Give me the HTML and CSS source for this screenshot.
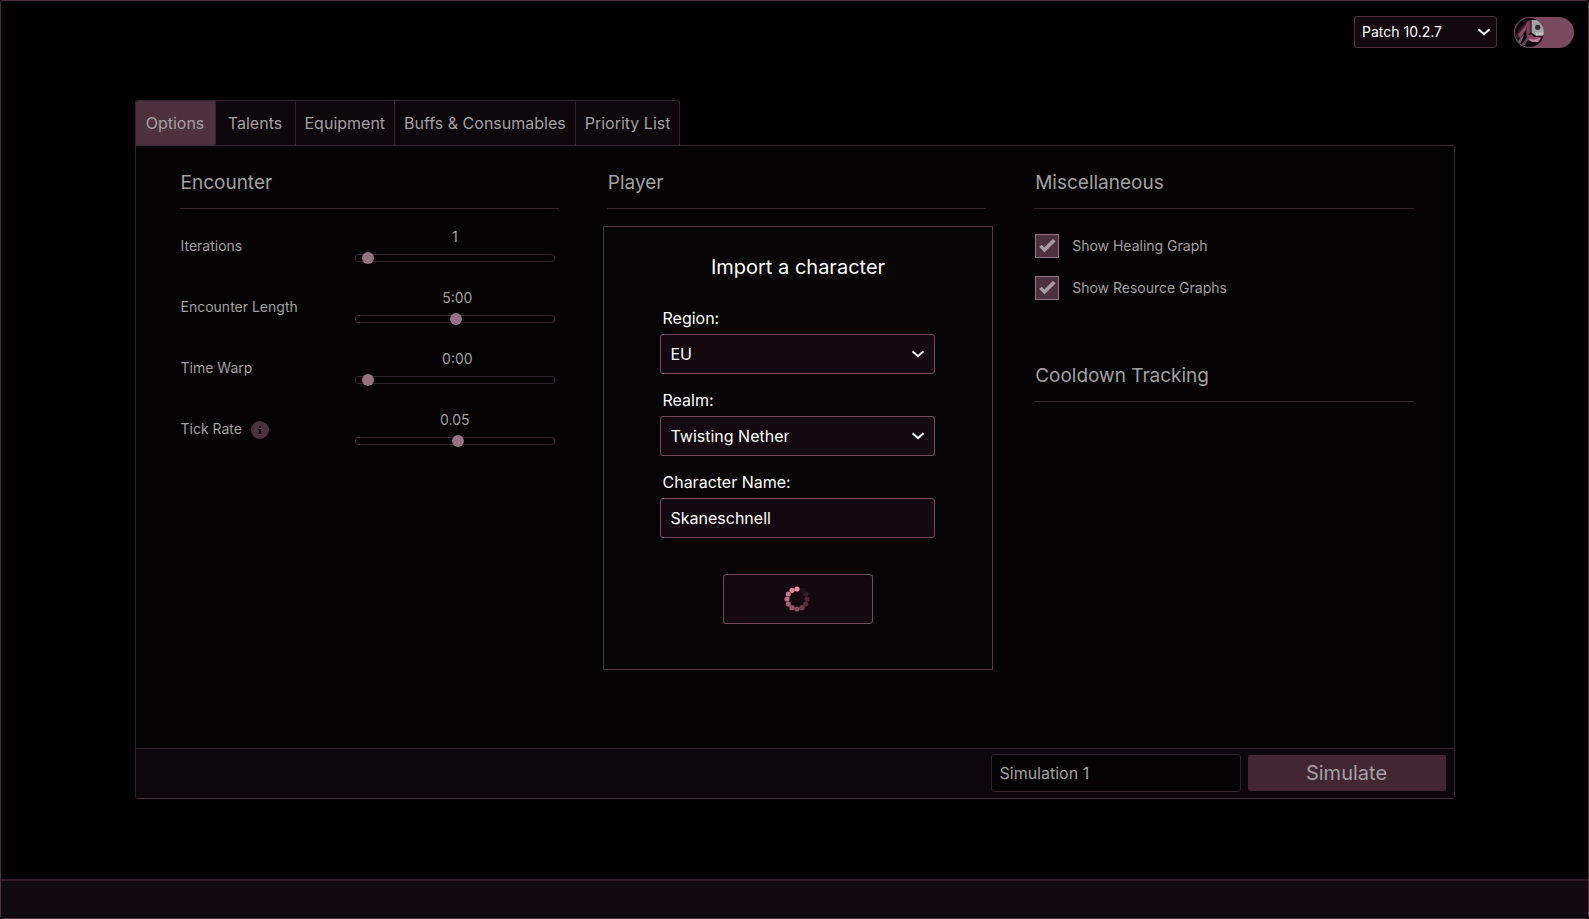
FILE: index.html
```html
<!DOCTYPE html>
<html lang="en">
<head>
<meta charset="utf-8">
<meta name="viewport" content="width=device-width, initial-scale=1">
<title>Simulation options</title>
<link rel="stylesheet" href="styles.css">
</head>
<body>
<div class="app">
  <header class="topbar">
    <div class="select-wrap">
      <select class="patch-select" aria-label="Game version">
        <option>Patch 10.2.7</option>
      </select>
      <svg class="chevron" viewBox="0 0 14 8" aria-hidden="true"><path d="M1.5 1.2 7 6.2 12.5 1.2"/></svg>
    </div>
    <button class="theme-toggle" type="button" aria-label="Switch theme">
      <svg class="theme-avatar" viewBox="0 0 30 30" aria-hidden="true">
        <defs><clipPath id="avatar-clip"><circle cx="15" cy="15" r="14"/></clipPath></defs>
        <g clip-path="url(#avatar-clip)">
          <rect width="30" height="30" fill="#0d080c"/>
          <path d="M1 19 5 12 13 4 16 3 12 12 7 19 2 24z" fill="#3a1e2c"/>
          <path d="M4 17 13 6 11 13 6 20z" fill="#8a4a68"/>
          <path d="M12 5 16 3 16 15 12 18z" fill="#7d3c5b"/>
          <path d="M4 23 10 16 8 22 5 27z" fill="#6e6168"/>
          <path d="M7 27 13 19 14 22 9 29z" fill="#5e4855"/>
          <path d="M12 17 17 17 19 19 27 19 24 24 14 23z" fill="#8e3f65"/>
          <path d="M14 21 19 22 26 20 23 24 17 24z" fill="#c48ba4"/>
          <path d="M17 3H30V18H21L17 15z" fill="#a3a3a3"/>
          <path d="M21 15H28V18H21z" fill="#c4c2c3"/>
          <circle cx="23" cy="10" r="2.6" fill="#2b2d2f"/>
        </g>
      </svg>
    </button>
  </header>

  <main class="workspace">
    <nav class="tabs" aria-label="Sections">
      <button class="tab tab-active" type="button">Options</button>
      <button class="tab" type="button">Talents</button>
      <button class="tab" type="button">Equipment</button>
      <button class="tab" type="button">Buffs &amp; Consumables</button>
      <button class="tab" type="button">Priority List</button>
    </nav>

    <div class="panel">
      <div class="columns">
        <section class="column">
          <h2 class="section-title">Encounter</h2>
          <div class="sliders">
            <div class="slider-row">
              <label class="slider-label" for="iterations">Iterations</label>
              <div class="slider-box">
                <output for="iterations">1</output>
                <input class="slider" id="iterations" type="range" min="1" max="100" value="1">
              </div>
            </div>
            <div class="slider-row">
              <label class="slider-label" for="length">Encounter Length</label>
              <div class="slider-box">
                <output class="time" for="length">5:00</output>
                <input class="slider" id="length" type="range" min="0" max="590" value="300">
              </div>
            </div>
            <div class="slider-row">
              <label class="slider-label" for="warp">Time Warp</label>
              <div class="slider-box">
                <output class="time" for="warp">0:00</output>
                <input class="slider" id="warp" type="range" min="0" max="600" value="0">
              </div>
            </div>
            <div class="slider-row">
              <div class="label-with-info">
                <label class="slider-label" for="tick">Tick Rate</label>
                <svg class="info" viewBox="0 0 18 18" aria-hidden="true">
                  <circle cx="9" cy="9" r="9" fill="#4f303d"/>
                  <path d="M8 5h2v2H8zM7 8h3v4h1v1H7v-1h1V9H7z" fill="#080406"/>
                </svg>
              </div>
              <div class="slider-box">
                <output for="tick">0.05</output>
                <input class="slider" id="tick" type="range" min="0.01" max="0.087" step="0.001" value="0.05">
              </div>
            </div>
          </div>
        </section>

        <section class="column">
          <h2 class="section-title">Player</h2>
          <form class="import">
            <h3 class="import-title">Import a character</h3>
            <div class="field">
              <label for="region">Region:</label>
              <div class="select-wrap">
                <select class="control" id="region"><option>EU</option></select>
                <svg class="chevron chevron-inset" viewBox="0 0 14 8" aria-hidden="true"><path d="M1.5 1.2 7 6.2 12.5 1.2"/></svg>
              </div>
            </div>
            <div class="field">
              <label for="realm">Realm:</label>
              <div class="select-wrap">
                <select class="control" id="realm"><option>Twisting Nether</option></select>
                <svg class="chevron chevron-inset" viewBox="0 0 14 8" aria-hidden="true"><path d="M1.5 1.2 7 6.2 12.5 1.2"/></svg>
              </div>
            </div>
            <div class="field">
              <label for="character">Character Name:</label>
              <input class="control" id="character" type="text" value="Skaneschnell">
            </div>
            <button class="import-button" type="button" aria-label="Importing">
              <svg class="spinner" viewBox="0 0 26 26" aria-hidden="true">
                <circle cx="13" cy="3" r="2.6"/>
                <circle cx="8" cy="4.3" r="2.6" opacity=".9"/>
                <circle cx="4.3" cy="8" r="2.6" opacity=".82"/>
                <circle cx="3" cy="13" r="2.6" opacity=".74"/>
                <circle cx="4.3" cy="18" r="2.6" opacity=".66"/>
                <circle cx="8" cy="21.7" r="2.6" opacity=".58"/>
                <circle cx="13" cy="23" r="2.6" opacity=".5"/>
                <circle cx="18" cy="21.7" r="2.6" opacity=".4"/>
                <circle cx="21.7" cy="18" r="2.6" opacity=".31"/>
                <circle cx="23" cy="13" r="2.6" opacity=".23"/>
                <circle cx="21.7" cy="8" r="2.6" opacity=".14"/>
                <circle cx="18" cy="4.3" r="2.6" opacity=".06"/>
              </svg>
            </button>
          </form>
        </section>

        <section class="column">
          <h2 class="section-title">Miscellaneous</h2>
          <div class="checks">
            <label class="check"><input type="checkbox" checked>Show Healing Graph</label>
            <label class="check"><input type="checkbox" checked>Show Resource Graphs</label>
          </div>
          <h2 class="section-title">Cooldown Tracking</h2>
        </section>
      </div>

      <div class="actions">
        <input class="sim-name" type="text" value="Simulation 1" aria-label="Simulation name">
        <button class="simulate" type="button">Simulate</button>
      </div>
    </div>
  </main>

  <footer class="footer"></footer>
</div>
</body>
</html>
```
FILE: styles.css
```css
*,
*::before {
  box-sizing: border-box;
}

body {
  margin: 0;
  background: #000;
  color: #a3a0a2;
  font: 14px/20px Inter, sans-serif;
}

button,
input,
select {
  margin: 0;
  color: inherit;
  font: inherit;
}

.app {
  display: flex;
  flex-direction: column;
  min-height: 100vh;
  border: 1px solid #4d3040;
  border-radius: 3px;
  background: #020102;
}

.topbar {
  display: flex;
  justify-content: flex-end;
  align-items: center;
  gap: 17px;
  padding: 15px 14px 0;
}

.select-wrap {
  display: grid;
  align-items: center;
}

.select-wrap > * {
  grid-area: 1 / 1;
}

.select-wrap select {
  appearance: none;
}

.chevron {
  justify-self: end;
  width: 14px;
  height: 8px;
  margin-right: 6px;
  fill: none;
  stroke: #fff;
  stroke-width: 2;
  pointer-events: none;
}

.chevron-inset {
  margin-right: 10px;
}

.patch-select {
  width: 143px;
  height: 32px;
  padding: 0 7px 1px;
  border: 1px solid #4f3040;
  border-radius: 3px;
  background: #140910;
  color: #fff;
}

.theme-toggle {
  display: flex;
  width: 60px;
  height: 31px;
  padding: 0;
  border: 0;
  border-radius: 16px;
  background: #7b495f;
}

.theme-avatar {
  width: 31px;
  height: 31px;
}

.workspace {
  width: 100%;
  max-width: 1320px;
  margin: 52px auto 80px;
}

.tabs {
  display: flex;
}

.tab {
  min-width: 80px;
  height: 45px;
  padding: 0 9px;
  border: 1px solid #35232d;
  border-width: 1px 1px 0 0;
  background: #0d060b;
  font-size: 16px;
}

.tab:first-child {
  min-width: 81px;
  border-left-width: 1px;
  border-radius: 3px 0 0 0;
}

.tab:last-child {
  border-radius: 0 3px 0 0;
}

.tab-active {
  background: #4f303d;
}

.panel {
  border: 1px solid #35232d;
  border-bottom-color: #4f3040;
  border-radius: 0 0 3px 3px;
  background: #040203;
}

.columns {
  display: grid;
  grid-template-columns: repeat(3, minmax(0, 1fr));
  gap: 48px;
  padding: 25px 40px 78px 44px;
}

.section-title {
  margin: 0;
  padding: 0 0 13px 1px;
  border-bottom: 1px solid #35232d;
  font-size: 19px;
  font-weight: 400;
  line-height: 24px;
}

.sliders {
  display: flex;
  flex-direction: column;
  gap: 26px;
  padding: 18px 4px 0 1px;
}

.slider-row {
  display: flex;
  justify-content: space-between;
  align-items: center;
}

.slider-label {
  padding-top: 2px;
}

.label-with-info {
  display: flex;
  align-items: end;
  gap: 9px;
}

.info {
  width: 18px;
  height: 18px;
}

.slider-box {
  display: flex;
  flex-direction: column;
  gap: 7px;
  width: 200px;
  text-align: center;
}

.time {
  padding-left: 5px;
}

.slider {
  appearance: none;
  width: 100%;
  height: 8px;
  padding: 0 6px;
  border: 1px solid #35232d;
  border-radius: 3px;
  background: #040203;
}

.slider::-webkit-slider-thumb {
  appearance: none;
  width: 12px;
  height: 12px;
  border-radius: 50%;
  background: #957385;
}

.import {
  display: flex;
  flex-direction: column;
  align-items: center;
  gap: 16px;
  margin: 17px -7px 0 -4px;
  padding: 28px 20px 45px;
  border: 1px solid #4f3844;
  background: #060405;
  color: #fff;
  font-size: 16px;
}

.import-title {
  margin: 0 0 13px;
  font-size: 20px;
  font-weight: 400;
  line-height: 24px;
}

.field {
  display: flex;
  flex-direction: column;
  gap: 6px;
  width: 100%;
  max-width: 275px;
}

.field label {
  padding-left: 2px;
}

.control {
  width: 100%;
  height: 40px;
  padding: 0 9px 1px;
  border: 1px solid #7b495f;
  border-radius: 3px;
  background: #140910;
}

.import-button {
  display: flex;
  justify-content: center;
  align-items: center;
  width: 150px;
  height: 50px;
  margin-top: 20px;
  padding: 0 1px 1px 0;
  border: 1px solid #7b495f;
  border-radius: 3px;
  background: #140910;
}

.spinner {
  width: 26px;
  height: 26px;
  fill: #f98fa5;
}

.checks {
  display: flex;
  flex-direction: column;
  gap: 18px;
  padding: 25px 0 64px 1px;
}

.check {
  display: flex;
  align-items: center;
  gap: 13px;
}

.check input {
  appearance: none;
  display: grid;
  place-items: center;
  width: 24px;
  height: 24px;
  border: 1px solid #957385;
  background: #4f303d;
}

.check input:checked::before {
  content: "";
  width: 18px;
  height: 16px;
  background: #a3a0a2;
  clip-path: polygon(6% 54%, 20% 42%, 34% 60%, 82% 6%, 97% 20%, 35% 90%);
}

.actions {
  display: flex;
  justify-content: flex-end;
  align-items: center;
  gap: 7px;
  height: 50px;
  padding: 0 8px 2px;
  border-top: 1px solid #35232d;
  background: #0d060b;
}

.sim-name {
  width: 250px;
  height: 38px;
  padding: 0 8px;
  border: 1px solid #35232d;
  border-radius: 3px;
  background: #040203;
  font-size: 16px;
}

.simulate {
  width: 198px;
  height: 36px;
  padding: 0;
  border: 0;
  border-radius: 2px;
  background: #422632;
  font-size: 20px;
}

.footer {
  height: 39px;
  margin-top: auto;
  border-top: 2px solid #311d2a;
  background: #130910;
}
```
